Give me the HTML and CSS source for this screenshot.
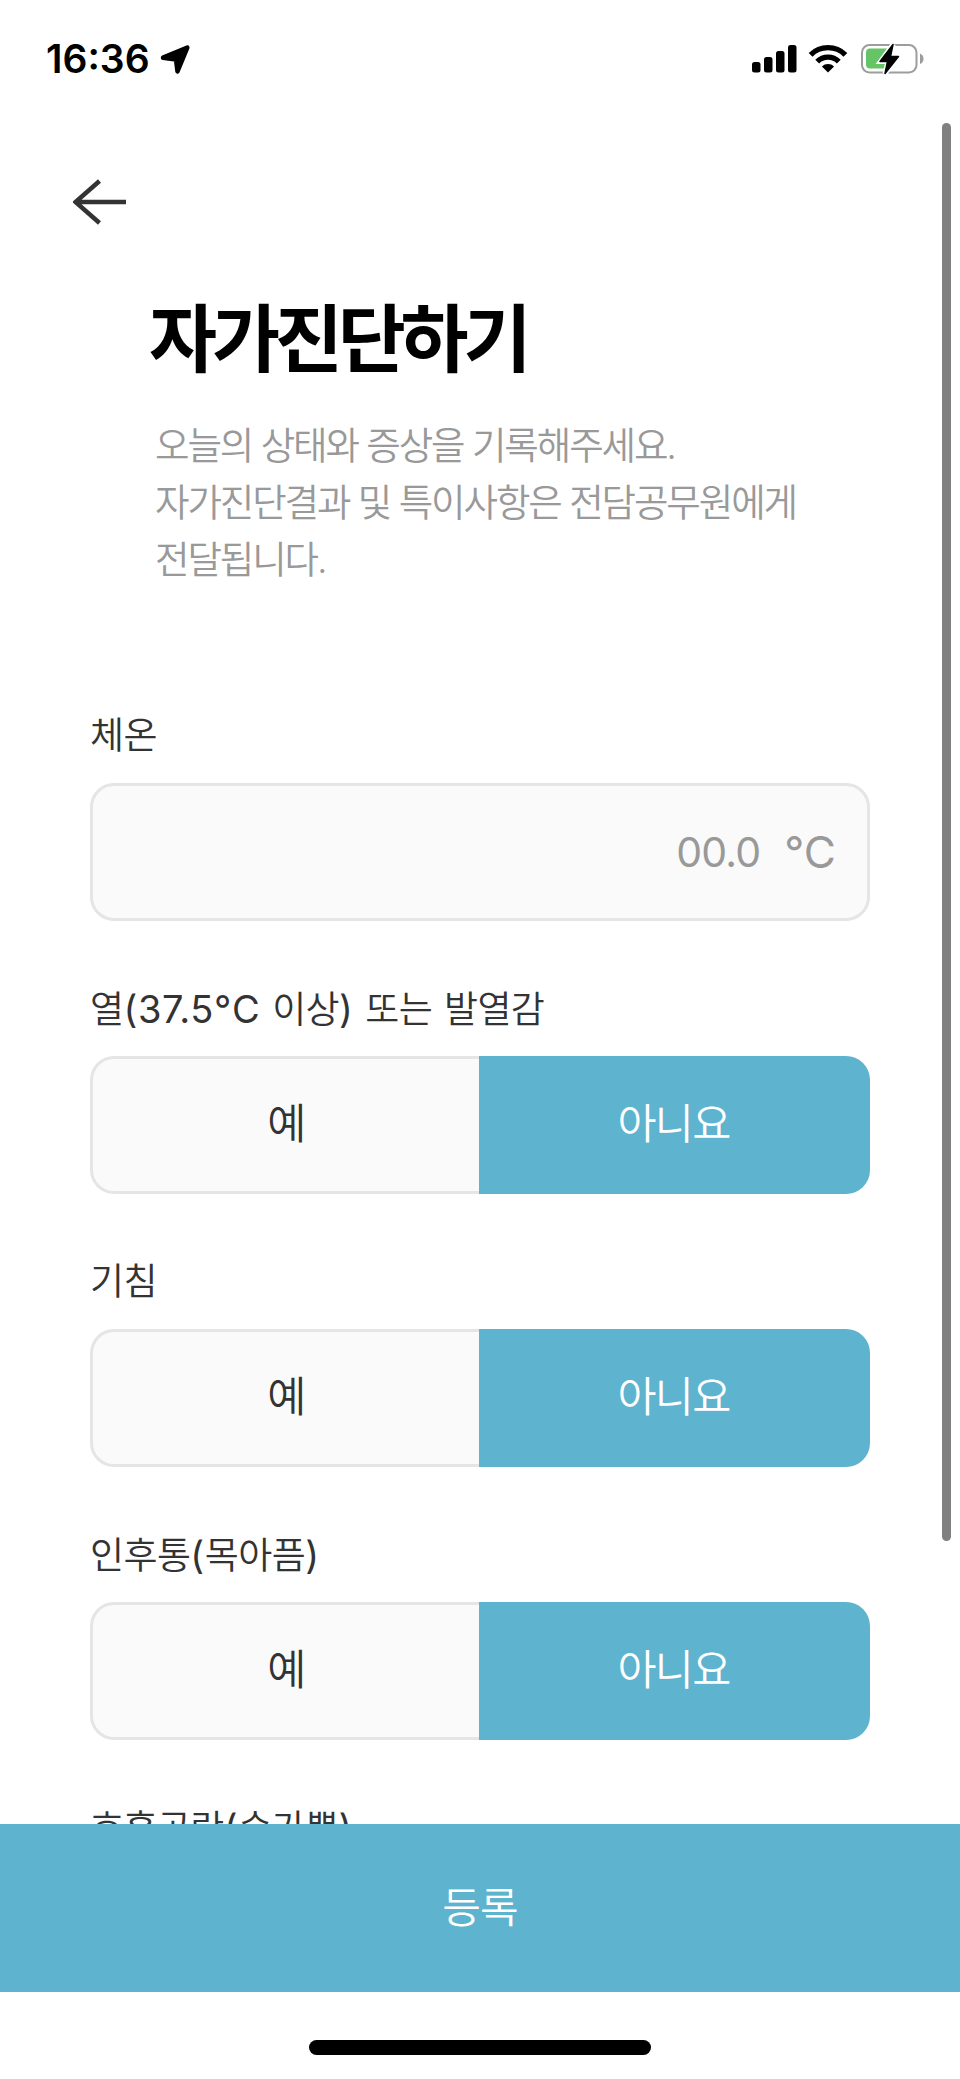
FILE: index.html
```html
<!DOCTYPE html>
<html lang="ko">
<head>
    <meta charset="UTF-8">
    <meta name="viewport" content="width=device-width, initial-scale=1.0">
    <title>자가진단하기</title>
    <link rel="stylesheet" href="styles.css">
</head>
<body>
    <div class="status-bar">
        <span class="time">16:36</span>
        <svg class="location-icon" width="32" height="32" viewBox="0 0 32 32">
            <path d="M28.300 3.700 L18.500 27.500 L17 15.500 L4 13.700 Z" fill="#000" stroke="#000" stroke-width="4.500" stroke-linejoin="round"/>
        </svg>
        <svg class="signal-icon" width="46" height="30" viewBox="0 0 46 30">
            <rect x="0" y="18" width="8.500" height="10.500" rx="2.500"/>
            <rect x="12" y="13" width="8.500" height="15.500" rx="2.500"/>
            <rect x="24" y="7" width="8.500" height="21.500" rx="2.500"/>
            <rect x="36" y="1" width="8.500" height="27.500" rx="2.500"/>
        </svg>
        <svg class="wifi-icon" width="40" height="30" viewBox="0 0 40 30">
            <path d="M2.600 11.800 A24.800 24.800 0 0 1 37.400 11.800" fill="none" stroke="#000" stroke-width="5.400"/>
            <path d="M9.200 18.600 A15.300 15.300 0 0 1 30.800 18.600" fill="none" stroke="#000" stroke-width="5.400"/>
            <path d="M13.900 23.500 A9 9 0 0 1 26.100 23.500 L20 29.500 Z"/>
        </svg>
        <svg class="battery-icon" width="64" height="32" viewBox="0 0 64 32">
            <rect x="1" y="2" width="54.500" height="27.500" rx="7.500" fill="none" stroke="#9d9d9d" stroke-width="2"/>
            <path d="M59 10.500 Q62.500 12 62.500 15.700 Q62.500 19.500 59 21 Z" fill="#9d9d9d"/>
            <path d="M9 5.500 H26 V25.500 H9 Q5 25.500 5 21.500 V9.500 Q5 5.500 9 5.500 Z" fill="#65c466"/>
            <path d="M32 1.500 L19.500 18.500 H27 L24 30.500 L37.500 13.500 H29 Z" fill="#fff" stroke="#fff" stroke-width="5"/>
            <path d="M32 1.500 L19 18.500 H26.500 L24 30.500 L37.500 13.500 H29.500 Z" stroke="#000" stroke-width="1.500" stroke-linejoin="round"/>
        </svg>
    </div>

    <div class="content">
        <a class="back-button" href="#">
            <svg width="54" height="46" viewBox="0 0 54 46">
                <path d="M26.500 2 L2.500 23 L26.500 44 M2.500 23 H53" fill="none" stroke="#333" stroke-width="4.500"/>
            </svg>
        </a>

        <h1>자가진단하기</h1>
        <p class="description">오늘의 상태와 증상을 기록해주세요.<br>자가진단결과 및 특이사항은 전담공무원에게<br>전달됩니다.</p>

        <form class="check-form">
            <div class="field">
                <div class="label">체온</div>
                <div class="temperature"><span class="value">00.0</span><span class="unit">°C</span></div>
            </div>
            <div class="field">
                <div class="label">열<span class="latin">(37.5°C</span> 이상<span class="latin">)</span> 또는 발열감</div>
                <div class="choices"><div class="choice yes">예</div><div class="choice no selected">아니요</div></div>
            </div>
            <div class="field">
                <div class="label">기침</div>
                <div class="choices"><div class="choice yes">예</div><div class="choice no selected">아니요</div></div>
            </div>
            <div class="field">
                <div class="label">인후통<span class="latin">(</span>목아픔<span class="latin">)</span></div>
                <div class="choices"><div class="choice yes">예</div><div class="choice no selected">아니요</div></div>
            </div>
            <div class="field">
                <div class="label">호흡곤란<span class="latin">(</span>숨가쁨<span class="latin">)</span></div>
            </div>
        </form>
    </div>

    <div class="submit-button">등록</div>
    <div class="home-area"><div class="home-indicator"></div></div>
    <div class="scrollbar"></div>
</body>
</html>
```
FILE: styles.css
```css
* {
    box-sizing: border-box;
}

body {
    margin: 0;
    height: 2079px;
    display: flex;
    flex-direction: column;
    position: relative;
    overflow: hidden;
    background-color: #fff;
    color: #333;
    font-family: Inter, "Noto Sans CJK KR", sans-serif;
}

.status-bar {
    height: 120px;
    flex: none;
    display: flex;
    align-items: flex-start;
    padding: 43px 35px 0 46px;
}

.time {
    width: 113px;
    font-size: 39px;
    font-weight: 600;
    line-height: 32px;
    color: #000;
}

.location-icon {
    margin-top: 1px;
}

.signal-icon {
    margin: 1px 0 0 auto;
}

.wifi-icon {
    margin-left: 10px;
}

.battery-icon {
    margin-left: 13px;
}

.content {
    height: 1704px;
    flex: none;
    overflow: hidden;
    padding: 0 90px;
}

.back-button {
    display: block;
    width: 54px;
    height: 46px;
    margin: 59px 0 0 -17px;
}

.back-button svg {
    display: block;
}

h1 {
    margin: 64px 0 0 59px;
    font-size: 74px;
    font-weight: 700;
    line-height: 100px;
    letter-spacing: -5.2px;
    color: #000;
    white-space: nowrap;
}

.description {
    margin: 28px 0 0 65px;
    font-size: 37.5px;
    font-weight: 350;
    line-height: 57px;
    letter-spacing: -2.1px;
    color: #999;
    white-space: nowrap;
}

.check-form {
    margin-top: 118px;
}

.field {
    height: 273px;
}

.label {
    height: 77px;
    font-size: 37px;
    font-weight: 350;
    line-height: 60px;
    letter-spacing: -0.6px;
    word-spacing: 2px;
    white-space: nowrap;
}

.latin {
    font-size: 38px;
    font-weight: 400;
    letter-spacing: 0.6px;
}

.temperature,
.choices {
    height: 138px;
    border-radius: 24px;
    display: flex;
}

.temperature {
    justify-content: flex-end;
    align-items: center;
    padding-right: 31px;
    border: 3px solid #e5e5e5;
    background-color: #fafafa;
    color: #999;
}

.value {
    font-size: 41px;
    font-weight: 400;
    letter-spacing: -0.8px;
}

.unit {
    margin-left: 24px;
    font-size: 44px;
    font-weight: 400;
}

.choice {
    display: flex;
    justify-content: center;
    align-items: center;
    padding-bottom: 9px;
    font-size: 42.5px;
    font-weight: 350;
    letter-spacing: -1.8px;
}

.yes {
    width: 389px;
    border: 3px solid #e5e5e5;
    border-right: none;
    border-radius: 24px 0 0 24px;
    background-color: #fafafa;
}

.no {
    flex: 1;
    padding-right: 2px;
    border-radius: 0 24px 24px 0;
}

.selected {
    background-color: #5eb3cf;
    color: #fff;
}

.submit-button {
    height: 168px;
    flex: none;
    display: flex;
    justify-content: center;
    align-items: center;
    padding-bottom: 7px;
    background-color: #5eb3cf;
    color: #fff;
    font-size: 42px;
    font-weight: 350;
    letter-spacing: -1px;
}

.home-area {
    height: 87px;
    padding-top: 48px;
}

.home-indicator {
    width: 342px;
    height: 15px;
    margin: 0 auto;
    border-radius: 8px;
    background-color: #000;
}

/* floats over the page edge */
.scrollbar {
    position: absolute;
    top: 123px;
    right: 9px;
    width: 9px;
    height: 1418px;
    border-radius: 5px;
    background-color: #808080;
}
```
